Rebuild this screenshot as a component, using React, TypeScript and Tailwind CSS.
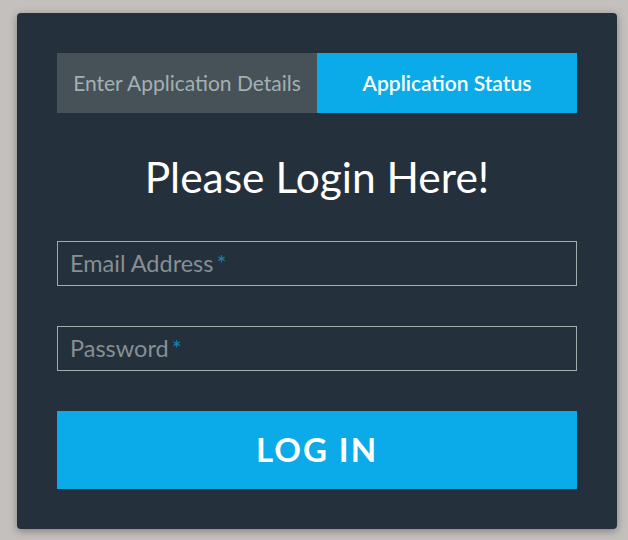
export default function App() {
  return (
    <div className="min-h-[540px] w-full bg-[#c4c0bd] pt-[13px] pl-[17px] font-['Lato',sans-serif]">
      <div className="w-[600px] rounded-[4px] bg-[#25303d] p-[40px] shadow-[0_2px_8px_rgba(0,0,0,0.35)]">
        {/* tabs */}
        <div className="flex h-[60px]">
          <div className="flex w-1/2 items-center justify-center bg-[#465258] text-[21px] text-[#a3b0b2]">
            Enter Application Details
          </div>
          <div className="flex w-1/2 items-center justify-center bg-[#0babe9] text-[21px] font-semibold text-white">
            Application Status
          </div>
        </div>

        <h1 className="mt-[40px] text-center text-[42.5px] leading-[48px] text-white">
          Please Login Here!
        </h1>

        <div className="mt-[40px] flex h-[45px] items-center border border-[#a1aeb0] px-[12px] text-[23.5px] text-[#858f94]">
          Email Address<span className="ml-[3px] text-[#1583b0]">*</span>
        </div>

        <div className="mt-[40px] flex h-[45px] items-center border border-[#a1aeb0] px-[12px] text-[23.5px] text-[#858f94]">
          Password<span className="ml-[3px] text-[#1583b0]">*</span>
        </div>

        <button className="mt-[40px] flex h-[78px] w-full items-center justify-center bg-[#0babe9] text-[33px] font-bold tracking-[2px] text-white">
          LOG IN
        </button>
      </div>
    </div>
  );
}
